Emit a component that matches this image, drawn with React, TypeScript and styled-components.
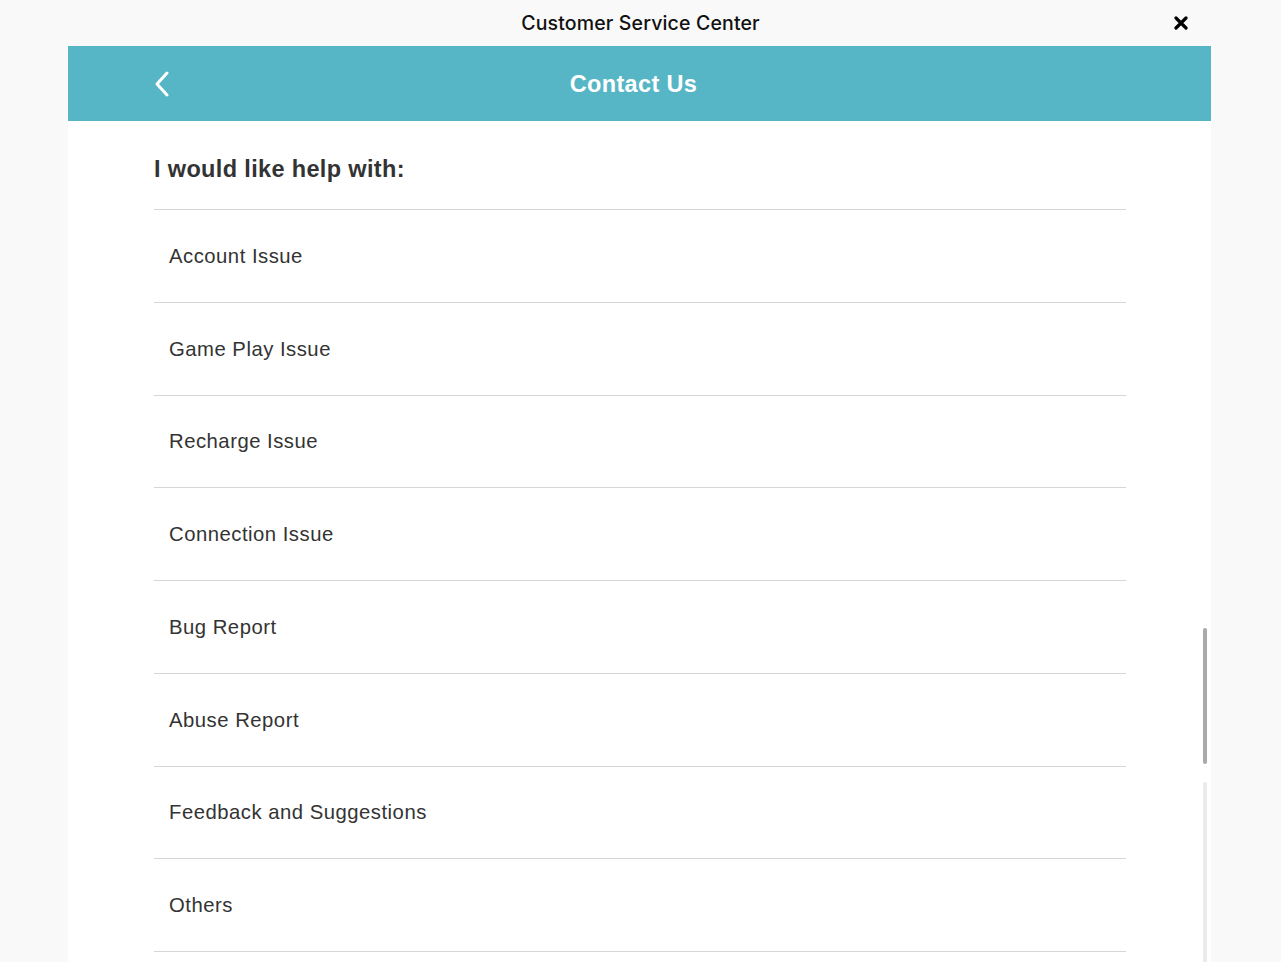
import React from "react";
import styled, { createGlobalStyle } from "styled-components";

const GlobalStyle = createGlobalStyle`
  html, body {
    margin: 0;
    padding: 0;
    background: #f9f9f9;
    overflow: hidden;
    font-family: "Liberation Sans", Arial, Helvetica, sans-serif;
  }
  * { box-sizing: border-box; }
`;

const Page = styled.div`
  width: 1281px;
  height: 962px;
  display: flex;
  flex-direction: column;
  overflow: hidden;
`;

const TopBar = styled.div`
  height: 46px;
  flex: 0 0 46px;
  display: grid;
  grid-template-columns: 1fr auto 1fr;
  align-items: center;
`;

const TopTitle = styled.div`
  grid-column: 2;
  font-family: Inter, "Liberation Sans", sans-serif;
  font-weight: 500;
  font-size: 19.5px;
  color: #111;
  letter-spacing: 0.15px;
`;

const CloseButton = styled.button`
  grid-column: 3;
  justify-self: end;
  margin-right: 92px;
  width: 16px;
  height: 16px;
  padding: 0;
  border: none;
  background: none;
  display: flex;
  align-items: center;
  justify-content: center;
  cursor: pointer;
`;

const Panel = styled.div`
  position: relative;
  margin: 0 70px 0 68px;
  flex: 1;
  background: #ffffff;
  display: flex;
  flex-direction: column;
`;

const Header = styled.div`
  height: 75px;
  flex: 0 0 75px;
  background: #56b6c6;
  display: grid;
  grid-template-columns: 1fr auto 1fr;
  align-items: center;
`;

const BackButton = styled.button`
  grid-column: 1;
  justify-self: start;
  margin-left: 85px;
  padding: 0;
  border: none;
  background: none;
  display: flex;
  align-items: center;
  cursor: pointer;
`;

const HeaderTitle = styled.h1`
  grid-column: 2;
  margin: 0;
  padding-top: 2px;
  font-size: 23.5px;
  font-weight: bold;
  letter-spacing: 0.35px;
  color: #ffffff;
  transform: translateX(-6px);
`;

const Content = styled.div`
  padding: 0 85px 0 86px;
`;

const Heading = styled.h2`
  margin: 0;
  height: 88px;
  display: flex;
  align-items: center;
  padding-top: 8px;
  font-size: 23.5px;
  font-weight: bold;
  letter-spacing: 0.35px;
  color: #333333;
`;

const List = styled.ul`
  list-style: none;
  margin: 0;
  padding: 0;
`;

const Row = styled.li`
  height: 92.75px;
  border-top: 1.3px solid #d6d6d6;
  padding-left: 15px;
  padding-top: 1px;
  display: flex;
  align-items: center;
  font-size: 20.3px;
  letter-spacing: 0.5px;
  color: #333333;
  cursor: pointer;
`;

const ScrollThumb = styled.div`
  position: absolute;
  right: 4px;
  top: 582px;
  width: 4px;
  height: 136px;
  border-radius: 2px;
  background: #a9a9a9;
`;

const ScrollTrack = styled.div`
  position: absolute;
  right: 4px;
  top: 736px;
  bottom: 0;
  width: 4px;
  border-radius: 2px 2px 0 0;
  background: #ebebeb;
`;

const items = [
  "Account Issue",
  "Game Play Issue",
  "Recharge Issue",
  "Connection Issue",
  "Bug Report",
  "Abuse Report",
  "Feedback and Suggestions",
  "Others",
];

export default function App() {
  return (
    <>
      <GlobalStyle />
      <Page>
        <TopBar>
          <TopTitle>Customer Service Center</TopTitle>
          <CloseButton aria-label="Close">
            <svg width="14" height="14" viewBox="0 0 14 14">
              <path d="M2 2 L12 12 M12 2 L2 12" stroke="#000" strokeWidth="3.2" strokeLinecap="round" />
            </svg>
          </CloseButton>
        </TopBar>
        <Panel>
          <Header>
            <BackButton aria-label="Back">
              <svg width="18" height="26" viewBox="0 0 18 26">
                <path d="M14 2 L4 13 L14 24" fill="none" stroke="#fff" strokeWidth="3" strokeLinecap="round" strokeLinejoin="round" />
              </svg>
            </BackButton>
            <HeaderTitle>Contact Us</HeaderTitle>
          </Header>
          <Content>
            <Heading>I would like help with:</Heading>
            <List>
              {items.map((t) => (
                <Row key={t}>{t}</Row>
              ))}
              <Row />
            </List>
          </Content>
          <ScrollThumb />
          <ScrollTrack />
        </Panel>
      </Page>
    </>
  );
}
